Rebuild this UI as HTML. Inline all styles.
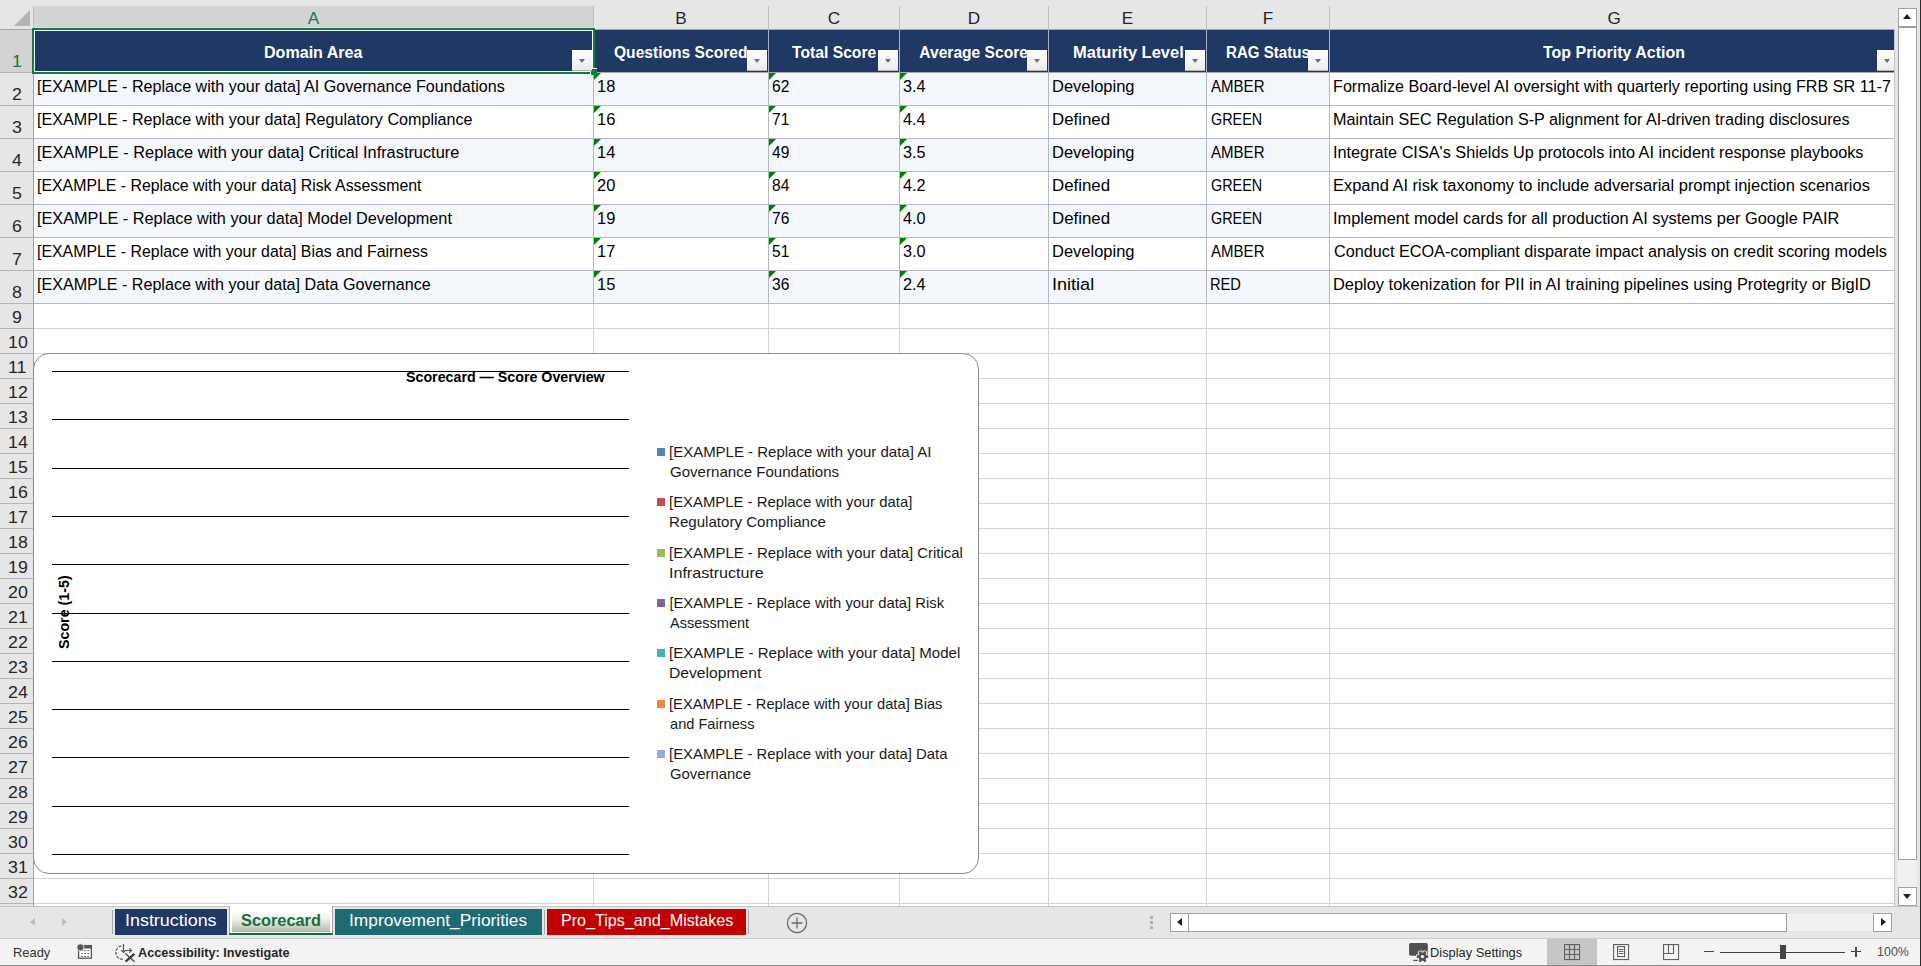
<!DOCTYPE html>
<html><head><meta charset="utf-8"><title>Scorecard</title>
<style>
*{margin:0;padding:0;box-sizing:border-box}
html,body{width:1921px;height:966px;overflow:hidden;background:#fff}
body{position:relative;font-family:"Liberation Sans",sans-serif;color:#000}
.a{position:absolute}
.t{position:absolute;white-space:nowrap;line-height:1;transform-origin:0 0}
.gl{position:absolute;background:#d4d4d4}
.dd{position:absolute;width:20px;height:21px;background:linear-gradient(#ffffff,#ebebef);border-bottom:1px solid #b4b4b4}
.dd:after{content:"";position:absolute;left:7px;top:9px;border-left:3.5px solid transparent;border-right:3.5px solid transparent;border-top:4px solid #6e6e6e}
.ei{position:absolute;width:0;height:0;border-top:7px solid #008000;border-right:7px solid transparent}
</style></head><body>

<div class="a" style="left:0;top:0;width:1921px;height:6px;background:#e6e6e6"></div>
<div class="a" style="left:1894px;top:0;width:27px;height:906px;background:#e6e6e6"></div>
<div class="a" style="left:0;top:0;width:33px;height:30px;background:#e6e6e6;border-bottom:1px solid #a8a8a8"></div>
<div class="a" style="left:14px;top:10px;width:0;height:0;border-left:16px solid transparent;border-bottom:16px solid #b4b4b4"></div>
<div class="gl" style="left:34px;top:328px;width:1860px;height:1px"></div>
<div class="gl" style="left:34px;top:353px;width:1860px;height:1px"></div>
<div class="gl" style="left:34px;top:378px;width:1860px;height:1px"></div>
<div class="gl" style="left:34px;top:403px;width:1860px;height:1px"></div>
<div class="gl" style="left:34px;top:428px;width:1860px;height:1px"></div>
<div class="gl" style="left:34px;top:453px;width:1860px;height:1px"></div>
<div class="gl" style="left:34px;top:478px;width:1860px;height:1px"></div>
<div class="gl" style="left:34px;top:503px;width:1860px;height:1px"></div>
<div class="gl" style="left:34px;top:528px;width:1860px;height:1px"></div>
<div class="gl" style="left:34px;top:553px;width:1860px;height:1px"></div>
<div class="gl" style="left:34px;top:578px;width:1860px;height:1px"></div>
<div class="gl" style="left:34px;top:603px;width:1860px;height:1px"></div>
<div class="gl" style="left:34px;top:628px;width:1860px;height:1px"></div>
<div class="gl" style="left:34px;top:653px;width:1860px;height:1px"></div>
<div class="gl" style="left:34px;top:678px;width:1860px;height:1px"></div>
<div class="gl" style="left:34px;top:703px;width:1860px;height:1px"></div>
<div class="gl" style="left:34px;top:728px;width:1860px;height:1px"></div>
<div class="gl" style="left:34px;top:753px;width:1860px;height:1px"></div>
<div class="gl" style="left:34px;top:778px;width:1860px;height:1px"></div>
<div class="gl" style="left:34px;top:803px;width:1860px;height:1px"></div>
<div class="gl" style="left:34px;top:828px;width:1860px;height:1px"></div>
<div class="gl" style="left:34px;top:853px;width:1860px;height:1px"></div>
<div class="gl" style="left:34px;top:878px;width:1860px;height:1px"></div>
<div class="gl" style="left:34px;top:903px;width:1860px;height:1px"></div>
<div class="gl" style="left:593px;top:304px;width:1px;height:602px"></div>
<div class="gl" style="left:768px;top:304px;width:1px;height:602px"></div>
<div class="gl" style="left:899px;top:304px;width:1px;height:602px"></div>
<div class="gl" style="left:1048px;top:304px;width:1px;height:602px"></div>
<div class="gl" style="left:1206px;top:304px;width:1px;height:602px"></div>
<div class="gl" style="left:1329px;top:304px;width:1px;height:602px"></div>
<div class="gl" style="left:1894px;top:304px;width:1px;height:602px"></div>
<div class="a" style="left:33px;top:6px;width:560px;height:24px;background:#d3d3d3;border-left:1px solid #c0c0c0;border-bottom:1px solid #a8a3a3"></div>
<div class="a" style="left:593px;top:6px;width:175px;height:24px;background:#e6e6e6;border-left:1px solid #c0c0c0;border-bottom:1px solid #a8a3a3"></div>
<div class="a" style="left:768px;top:6px;width:131px;height:24px;background:#e6e6e6;border-left:1px solid #c0c0c0;border-bottom:1px solid #a8a3a3"></div>
<div class="a" style="left:899px;top:6px;width:149px;height:24px;background:#e6e6e6;border-left:1px solid #c0c0c0;border-bottom:1px solid #a8a3a3"></div>
<div class="a" style="left:1048px;top:6px;width:158px;height:24px;background:#e6e6e6;border-left:1px solid #c0c0c0;border-bottom:1px solid #a8a3a3"></div>
<div class="a" style="left:1206px;top:6px;width:123px;height:24px;background:#e6e6e6;border-left:1px solid #c0c0c0;border-bottom:1px solid #a8a3a3"></div>
<div class="a" style="left:1329px;top:6px;width:565px;height:24px;background:#e6e6e6;border-left:1px solid #c0c0c0;border-bottom:1px solid #a8a3a3"></div>
<div class="a" style="left:34px;top:27px;width:559px;height:1px;background:#e6dede"></div>
<div class="a" style="left:0;top:30px;width:34px;height:43px;background:#d3d3d3;border-bottom:1px solid #b4b4b4;border-right:1px solid #a0a0a0"></div>
<div class="a" style="left:0;top:73px;width:34px;height:33px;background:#e6e6e6;border-bottom:1px solid #b4b4b4;border-right:1px solid #a0a0a0"></div>
<div class="a" style="left:0;top:106px;width:34px;height:33px;background:#e6e6e6;border-bottom:1px solid #b4b4b4;border-right:1px solid #a0a0a0"></div>
<div class="a" style="left:0;top:139px;width:34px;height:33px;background:#e6e6e6;border-bottom:1px solid #b4b4b4;border-right:1px solid #a0a0a0"></div>
<div class="a" style="left:0;top:172px;width:34px;height:33px;background:#e6e6e6;border-bottom:1px solid #b4b4b4;border-right:1px solid #a0a0a0"></div>
<div class="a" style="left:0;top:205px;width:34px;height:33px;background:#e6e6e6;border-bottom:1px solid #b4b4b4;border-right:1px solid #a0a0a0"></div>
<div class="a" style="left:0;top:238px;width:34px;height:33px;background:#e6e6e6;border-bottom:1px solid #b4b4b4;border-right:1px solid #a0a0a0"></div>
<div class="a" style="left:0;top:271px;width:34px;height:33px;background:#e6e6e6;border-bottom:1px solid #b4b4b4;border-right:1px solid #a0a0a0"></div>
<div class="a" style="left:0;top:304px;width:34px;height:25px;background:#e6e6e6;border-bottom:1px solid #b4b4b4;border-right:1px solid #a0a0a0"></div>
<div class="a" style="left:0;top:329px;width:34px;height:25px;background:#e6e6e6;border-bottom:1px solid #b4b4b4;border-right:1px solid #a0a0a0"></div>
<div class="a" style="left:0;top:354px;width:34px;height:25px;background:#e6e6e6;border-bottom:1px solid #b4b4b4;border-right:1px solid #a0a0a0"></div>
<div class="a" style="left:0;top:379px;width:34px;height:25px;background:#e6e6e6;border-bottom:1px solid #b4b4b4;border-right:1px solid #a0a0a0"></div>
<div class="a" style="left:0;top:404px;width:34px;height:25px;background:#e6e6e6;border-bottom:1px solid #b4b4b4;border-right:1px solid #a0a0a0"></div>
<div class="a" style="left:0;top:429px;width:34px;height:25px;background:#e6e6e6;border-bottom:1px solid #b4b4b4;border-right:1px solid #a0a0a0"></div>
<div class="a" style="left:0;top:454px;width:34px;height:25px;background:#e6e6e6;border-bottom:1px solid #b4b4b4;border-right:1px solid #a0a0a0"></div>
<div class="a" style="left:0;top:479px;width:34px;height:25px;background:#e6e6e6;border-bottom:1px solid #b4b4b4;border-right:1px solid #a0a0a0"></div>
<div class="a" style="left:0;top:504px;width:34px;height:25px;background:#e6e6e6;border-bottom:1px solid #b4b4b4;border-right:1px solid #a0a0a0"></div>
<div class="a" style="left:0;top:529px;width:34px;height:25px;background:#e6e6e6;border-bottom:1px solid #b4b4b4;border-right:1px solid #a0a0a0"></div>
<div class="a" style="left:0;top:554px;width:34px;height:25px;background:#e6e6e6;border-bottom:1px solid #b4b4b4;border-right:1px solid #a0a0a0"></div>
<div class="a" style="left:0;top:579px;width:34px;height:25px;background:#e6e6e6;border-bottom:1px solid #b4b4b4;border-right:1px solid #a0a0a0"></div>
<div class="a" style="left:0;top:604px;width:34px;height:25px;background:#e6e6e6;border-bottom:1px solid #b4b4b4;border-right:1px solid #a0a0a0"></div>
<div class="a" style="left:0;top:629px;width:34px;height:25px;background:#e6e6e6;border-bottom:1px solid #b4b4b4;border-right:1px solid #a0a0a0"></div>
<div class="a" style="left:0;top:654px;width:34px;height:25px;background:#e6e6e6;border-bottom:1px solid #b4b4b4;border-right:1px solid #a0a0a0"></div>
<div class="a" style="left:0;top:679px;width:34px;height:25px;background:#e6e6e6;border-bottom:1px solid #b4b4b4;border-right:1px solid #a0a0a0"></div>
<div class="a" style="left:0;top:704px;width:34px;height:25px;background:#e6e6e6;border-bottom:1px solid #b4b4b4;border-right:1px solid #a0a0a0"></div>
<div class="a" style="left:0;top:729px;width:34px;height:25px;background:#e6e6e6;border-bottom:1px solid #b4b4b4;border-right:1px solid #a0a0a0"></div>
<div class="a" style="left:0;top:754px;width:34px;height:25px;background:#e6e6e6;border-bottom:1px solid #b4b4b4;border-right:1px solid #a0a0a0"></div>
<div class="a" style="left:0;top:779px;width:34px;height:25px;background:#e6e6e6;border-bottom:1px solid #b4b4b4;border-right:1px solid #a0a0a0"></div>
<div class="a" style="left:0;top:804px;width:34px;height:25px;background:#e6e6e6;border-bottom:1px solid #b4b4b4;border-right:1px solid #a0a0a0"></div>
<div class="a" style="left:0;top:829px;width:34px;height:25px;background:#e6e6e6;border-bottom:1px solid #b4b4b4;border-right:1px solid #a0a0a0"></div>
<div class="a" style="left:0;top:854px;width:34px;height:25px;background:#e6e6e6;border-bottom:1px solid #b4b4b4;border-right:1px solid #a0a0a0"></div>
<div class="a" style="left:0;top:879px;width:34px;height:25px;background:#e6e6e6;border-bottom:1px solid #b4b4b4;border-right:1px solid #a0a0a0"></div>
<div class="a" style="left:0;top:904px;width:34px;height:2px;background:#e6e6e6;border-right:1px solid #a6a6a6"></div>
<div class="a" style="left:34px;top:30px;width:560px;height:43px;background:#203864;border-right:1px solid #aab1bf;border-bottom:1px solid #a9a9a9"></div>
<div class="a" style="left:594px;top:30px;width:175px;height:43px;background:#203864;border-right:1px solid #aab1bf;border-bottom:1px solid #a9a9a9"></div>
<div class="a" style="left:769px;top:30px;width:131px;height:43px;background:#203864;border-right:1px solid #aab1bf;border-bottom:1px solid #a9a9a9"></div>
<div class="a" style="left:900px;top:30px;width:149px;height:43px;background:#203864;border-right:1px solid #aab1bf;border-bottom:1px solid #a9a9a9"></div>
<div class="a" style="left:1049px;top:30px;width:158px;height:43px;background:#203864;border-right:1px solid #aab1bf;border-bottom:1px solid #a9a9a9"></div>
<div class="a" style="left:1207px;top:30px;width:123px;height:43px;background:#203864;border-right:1px solid #aab1bf;border-bottom:1px solid #a9a9a9"></div>
<div class="a" style="left:1330px;top:30px;width:565px;height:43px;background:#203864;border-right:1px solid #aab1bf;border-bottom:1px solid #a9a9a9"></div>
<div class="a" style="left:34px;top:73px;width:560px;height:33px;background:#f3f6fb;border-right:1px solid #b1b8c4;border-bottom:1px solid #b1b8c4"></div>
<div class="a" style="left:594px;top:73px;width:175px;height:33px;background:#f3f6fb;border-right:1px solid #b1b8c4;border-bottom:1px solid #b1b8c4"></div>
<div class="ei" style="left:594px;top:73px"></div>
<div class="a" style="left:769px;top:73px;width:131px;height:33px;background:#f3f6fb;border-right:1px solid #b1b8c4;border-bottom:1px solid #b1b8c4"></div>
<div class="ei" style="left:769px;top:73px"></div>
<div class="a" style="left:900px;top:73px;width:149px;height:33px;background:#f3f6fb;border-right:1px solid #b1b8c4;border-bottom:1px solid #b1b8c4"></div>
<div class="ei" style="left:900px;top:73px"></div>
<div class="a" style="left:1049px;top:73px;width:158px;height:33px;background:#f3f6fb;border-right:1px solid #b1b8c4;border-bottom:1px solid #b1b8c4"></div>
<div class="a" style="left:1207px;top:73px;width:123px;height:33px;background:#f3f6fb;border-right:1px solid #b1b8c4;border-bottom:1px solid #b1b8c4"></div>
<div class="a" style="left:1330px;top:73px;width:565px;height:33px;background:#ffffff;border-right:1px solid #b1b8c4;border-bottom:1px solid #b1b8c4"></div>
<div class="a" style="left:34px;top:106px;width:560px;height:33px;background:#ffffff;border-right:1px solid #b1b8c4;border-bottom:1px solid #b1b8c4"></div>
<div class="a" style="left:594px;top:106px;width:175px;height:33px;background:#ffffff;border-right:1px solid #b1b8c4;border-bottom:1px solid #b1b8c4"></div>
<div class="ei" style="left:594px;top:106px"></div>
<div class="a" style="left:769px;top:106px;width:131px;height:33px;background:#ffffff;border-right:1px solid #b1b8c4;border-bottom:1px solid #b1b8c4"></div>
<div class="ei" style="left:769px;top:106px"></div>
<div class="a" style="left:900px;top:106px;width:149px;height:33px;background:#ffffff;border-right:1px solid #b1b8c4;border-bottom:1px solid #b1b8c4"></div>
<div class="ei" style="left:900px;top:106px"></div>
<div class="a" style="left:1049px;top:106px;width:158px;height:33px;background:#ffffff;border-right:1px solid #b1b8c4;border-bottom:1px solid #b1b8c4"></div>
<div class="a" style="left:1207px;top:106px;width:123px;height:33px;background:#ffffff;border-right:1px solid #b1b8c4;border-bottom:1px solid #b1b8c4"></div>
<div class="a" style="left:1330px;top:106px;width:565px;height:33px;background:#ffffff;border-right:1px solid #b1b8c4;border-bottom:1px solid #b1b8c4"></div>
<div class="a" style="left:34px;top:139px;width:560px;height:33px;background:#f3f6fb;border-right:1px solid #b1b8c4;border-bottom:1px solid #b1b8c4"></div>
<div class="a" style="left:594px;top:139px;width:175px;height:33px;background:#f3f6fb;border-right:1px solid #b1b8c4;border-bottom:1px solid #b1b8c4"></div>
<div class="ei" style="left:594px;top:139px"></div>
<div class="a" style="left:769px;top:139px;width:131px;height:33px;background:#f3f6fb;border-right:1px solid #b1b8c4;border-bottom:1px solid #b1b8c4"></div>
<div class="ei" style="left:769px;top:139px"></div>
<div class="a" style="left:900px;top:139px;width:149px;height:33px;background:#f3f6fb;border-right:1px solid #b1b8c4;border-bottom:1px solid #b1b8c4"></div>
<div class="ei" style="left:900px;top:139px"></div>
<div class="a" style="left:1049px;top:139px;width:158px;height:33px;background:#f3f6fb;border-right:1px solid #b1b8c4;border-bottom:1px solid #b1b8c4"></div>
<div class="a" style="left:1207px;top:139px;width:123px;height:33px;background:#f3f6fb;border-right:1px solid #b1b8c4;border-bottom:1px solid #b1b8c4"></div>
<div class="a" style="left:1330px;top:139px;width:565px;height:33px;background:#ffffff;border-right:1px solid #b1b8c4;border-bottom:1px solid #b1b8c4"></div>
<div class="a" style="left:34px;top:172px;width:560px;height:33px;background:#ffffff;border-right:1px solid #b1b8c4;border-bottom:1px solid #b1b8c4"></div>
<div class="a" style="left:594px;top:172px;width:175px;height:33px;background:#ffffff;border-right:1px solid #b1b8c4;border-bottom:1px solid #b1b8c4"></div>
<div class="ei" style="left:594px;top:172px"></div>
<div class="a" style="left:769px;top:172px;width:131px;height:33px;background:#ffffff;border-right:1px solid #b1b8c4;border-bottom:1px solid #b1b8c4"></div>
<div class="ei" style="left:769px;top:172px"></div>
<div class="a" style="left:900px;top:172px;width:149px;height:33px;background:#ffffff;border-right:1px solid #b1b8c4;border-bottom:1px solid #b1b8c4"></div>
<div class="ei" style="left:900px;top:172px"></div>
<div class="a" style="left:1049px;top:172px;width:158px;height:33px;background:#ffffff;border-right:1px solid #b1b8c4;border-bottom:1px solid #b1b8c4"></div>
<div class="a" style="left:1207px;top:172px;width:123px;height:33px;background:#ffffff;border-right:1px solid #b1b8c4;border-bottom:1px solid #b1b8c4"></div>
<div class="a" style="left:1330px;top:172px;width:565px;height:33px;background:#ffffff;border-right:1px solid #b1b8c4;border-bottom:1px solid #b1b8c4"></div>
<div class="a" style="left:34px;top:205px;width:560px;height:33px;background:#f3f6fb;border-right:1px solid #b1b8c4;border-bottom:1px solid #b1b8c4"></div>
<div class="a" style="left:594px;top:205px;width:175px;height:33px;background:#f3f6fb;border-right:1px solid #b1b8c4;border-bottom:1px solid #b1b8c4"></div>
<div class="ei" style="left:594px;top:205px"></div>
<div class="a" style="left:769px;top:205px;width:131px;height:33px;background:#f3f6fb;border-right:1px solid #b1b8c4;border-bottom:1px solid #b1b8c4"></div>
<div class="ei" style="left:769px;top:205px"></div>
<div class="a" style="left:900px;top:205px;width:149px;height:33px;background:#f3f6fb;border-right:1px solid #b1b8c4;border-bottom:1px solid #b1b8c4"></div>
<div class="ei" style="left:900px;top:205px"></div>
<div class="a" style="left:1049px;top:205px;width:158px;height:33px;background:#f3f6fb;border-right:1px solid #b1b8c4;border-bottom:1px solid #b1b8c4"></div>
<div class="a" style="left:1207px;top:205px;width:123px;height:33px;background:#f3f6fb;border-right:1px solid #b1b8c4;border-bottom:1px solid #b1b8c4"></div>
<div class="a" style="left:1330px;top:205px;width:565px;height:33px;background:#ffffff;border-right:1px solid #b1b8c4;border-bottom:1px solid #b1b8c4"></div>
<div class="a" style="left:34px;top:238px;width:560px;height:33px;background:#ffffff;border-right:1px solid #b1b8c4;border-bottom:1px solid #b1b8c4"></div>
<div class="a" style="left:594px;top:238px;width:175px;height:33px;background:#ffffff;border-right:1px solid #b1b8c4;border-bottom:1px solid #b1b8c4"></div>
<div class="ei" style="left:594px;top:238px"></div>
<div class="a" style="left:769px;top:238px;width:131px;height:33px;background:#ffffff;border-right:1px solid #b1b8c4;border-bottom:1px solid #b1b8c4"></div>
<div class="ei" style="left:769px;top:238px"></div>
<div class="a" style="left:900px;top:238px;width:149px;height:33px;background:#ffffff;border-right:1px solid #b1b8c4;border-bottom:1px solid #b1b8c4"></div>
<div class="ei" style="left:900px;top:238px"></div>
<div class="a" style="left:1049px;top:238px;width:158px;height:33px;background:#ffffff;border-right:1px solid #b1b8c4;border-bottom:1px solid #b1b8c4"></div>
<div class="a" style="left:1207px;top:238px;width:123px;height:33px;background:#ffffff;border-right:1px solid #b1b8c4;border-bottom:1px solid #b1b8c4"></div>
<div class="a" style="left:1330px;top:238px;width:565px;height:33px;background:#ffffff;border-right:1px solid #b1b8c4;border-bottom:1px solid #b1b8c4"></div>
<div class="a" style="left:34px;top:271px;width:560px;height:33px;background:#f3f6fb;border-right:1px solid #b1b8c4;border-bottom:1px solid #b1b8c4"></div>
<div class="a" style="left:594px;top:271px;width:175px;height:33px;background:#f3f6fb;border-right:1px solid #b1b8c4;border-bottom:1px solid #b1b8c4"></div>
<div class="ei" style="left:594px;top:271px"></div>
<div class="a" style="left:769px;top:271px;width:131px;height:33px;background:#f3f6fb;border-right:1px solid #b1b8c4;border-bottom:1px solid #b1b8c4"></div>
<div class="ei" style="left:769px;top:271px"></div>
<div class="a" style="left:900px;top:271px;width:149px;height:33px;background:#f3f6fb;border-right:1px solid #b1b8c4;border-bottom:1px solid #b1b8c4"></div>
<div class="ei" style="left:900px;top:271px"></div>
<div class="a" style="left:1049px;top:271px;width:158px;height:33px;background:#f3f6fb;border-right:1px solid #b1b8c4;border-bottom:1px solid #b1b8c4"></div>
<div class="a" style="left:1207px;top:271px;width:123px;height:33px;background:#f3f6fb;border-right:1px solid #b1b8c4;border-bottom:1px solid #b1b8c4"></div>
<div class="a" style="left:1330px;top:271px;width:565px;height:33px;background:#ffffff;border-right:1px solid #b1b8c4;border-bottom:1px solid #b1b8c4"></div>
<div class="a" style="left:32px;top:28px;width:563px;height:46px;border:2px solid #107c41"></div>
<div class="a" style="left:34px;top:30px;width:559px;height:42px;border:1px solid #fff"></div>
<div class="a" style="left:590px;top:68px;width:7px;height:7px;background:#107c41;border-left:1px solid #fff;border-top:1px solid #fff"></div>
<div class="a" style="left:33px;top:353px;width:946px;height:521px;background:#fff;border:1px solid #8a8a8a;border-radius:16px"></div>
<div class="a" style="left:52px;top:371px;width:577px;height:1px;background:#000"></div>
<div class="a" style="left:52px;top:419px;width:577px;height:1px;background:#000"></div>
<div class="a" style="left:52px;top:468px;width:577px;height:1px;background:#000"></div>
<div class="a" style="left:52px;top:516px;width:577px;height:1px;background:#000"></div>
<div class="a" style="left:52px;top:564px;width:577px;height:1px;background:#000"></div>
<div class="a" style="left:52px;top:613px;width:577px;height:1px;background:#000"></div>
<div class="a" style="left:52px;top:661px;width:577px;height:1px;background:#000"></div>
<div class="a" style="left:52px;top:709px;width:577px;height:1px;background:#000"></div>
<div class="a" style="left:52px;top:757px;width:577px;height:1px;background:#000"></div>
<div class="a" style="left:52px;top:806px;width:577px;height:1px;background:#000"></div>
<div class="a" style="left:52px;top:854px;width:577px;height:1px;background:#000"></div>
<div class="a" style="left:657px;top:448px;width:8px;height:8px;background:#4f81bd"></div>
<div class="a" style="left:657px;top:498px;width:8px;height:8px;background:#c0504d"></div>
<div class="a" style="left:657px;top:549px;width:8px;height:8px;background:#9bbb59"></div>
<div class="a" style="left:657px;top:599px;width:8px;height:8px;background:#8064a2"></div>
<div class="a" style="left:657px;top:649px;width:8px;height:8px;background:#4bacc6"></div>
<div class="a" style="left:657px;top:700px;width:8px;height:8px;background:#ea8a40"></div>
<div class="a" style="left:657px;top:750px;width:8px;height:8px;background:#95abd6"></div>
<div class="a" style="left:1894px;top:29px;width:1px;height:877px;background:#c6c6c6"></div>
<div class="a" style="left:1898px;top:8px;width:19px;height:19px;background:#fff;border:1px solid #a0a0a0"></div>
<div class="a" style="left:1903px;top:14px;width:0;height:0;border-left:4.5px solid transparent;border-right:4.5px solid transparent;border-bottom:5px solid #1e1e1e"></div>
<div class="a" style="left:1898px;top:27px;width:19px;height:833px;background:#fff;border:1px solid #a0a0a0"></div>
<div class="a" style="left:1898px;top:860px;width:19px;height:28px;background:#f0f0f0"></div>
<div class="a" style="left:1898px;top:887px;width:19px;height:19px;background:#fff;border:1px solid #a0a0a0"></div>
<div class="a" style="left:1903px;top:894px;width:0;height:0;border-left:4.5px solid transparent;border-right:4.5px solid transparent;border-top:5px solid #1e1e1e"></div>
<div class="a" style="left:0;top:906px;width:1920px;height:32px;background:#e6e6e6;border-top:1px solid #c6c6c6"></div>
<div class="a" style="left:30px;top:918px;width:0;height:0;border-top:4.5px solid transparent;border-bottom:4.5px solid transparent;border-right:5px solid #bdbdbd"></div>
<div class="a" style="left:62px;top:918px;width:0;height:0;border-top:4.5px solid transparent;border-bottom:4.5px solid transparent;border-left:5px solid #bdbdbd"></div>
<div class="a" style="left:112px;top:910px;width:1px;height:24px;background:#a8a8a8"></div>
<div class="a" style="left:115px;top:909px;width:112px;height:26px;background:#1f3864"></div>
<div class="a" style="left:229px;top:906px;width:104px;height:27px;background:#fff;border-left:1px solid #a8a8a8;border-right:1px solid #a8a8a8"></div>
<div class="a" style="left:232px;top:910px;width:98px;height:22px;background:linear-gradient(#ffffff 0%,#eef1ec 40%,#c4cfbe 80%,#a9b8a3 100%)"></div>
<div class="a" style="left:229px;top:933px;width:104px;height:2px;background:#13703a"></div>
<div class="a" style="left:335px;top:909px;width:207px;height:26px;background:#1e6b73"></div>
<div class="a" style="left:547px;top:909px;width:199px;height:26px;background:#c00000"></div>
<div class="a" style="left:544px;top:910px;width:1px;height:24px;background:#a8a8a8"></div>
<div class="a" style="left:748px;top:910px;width:1px;height:24px;background:#a8a8a8"></div>
<svg class="a" style="left:786px;top:912px" width="22" height="22" viewBox="0 0 22 22"><circle cx="11" cy="11" r="9.6" fill="none" stroke="#6b6b6b" stroke-width="1.3"/><path d="M5.5 11H16.5 M11 5.5V16.5" stroke="#6b6b6b" stroke-width="1.3"/></svg>
<div class="a" style="left:1150px;top:916px;width:3px;height:3px;background:#b0b0b0"></div>
<div class="a" style="left:1150px;top:921px;width:3px;height:3px;background:#b0b0b0"></div>
<div class="a" style="left:1150px;top:926px;width:3px;height:3px;background:#b0b0b0"></div>
<div class="a" style="left:1170px;top:913px;width:19px;height:19px;background:#fff;border:1px solid #a0a0a0"></div>
<div class="a" style="left:1177px;top:918px;width:0;height:0;border-top:4.5px solid transparent;border-bottom:4.5px solid transparent;border-right:5px solid #1e1e1e"></div>
<div class="a" style="left:1188px;top:913px;width:599px;height:19px;background:#fff;border:1px solid #a0a0a0"></div>
<div class="a" style="left:1787px;top:914px;width:87px;height:17px;background:#f0f0f0"></div>
<div class="a" style="left:1873px;top:913px;width:19px;height:19px;background:#fff;border:1px solid #a0a0a0"></div>
<div class="a" style="left:1881px;top:918px;width:0;height:0;border-top:4.5px solid transparent;border-bottom:4.5px solid transparent;border-left:5px solid #1e1e1e"></div>
<div class="a" style="left:0;top:938px;width:1920px;height:28px;background:#f3f3f3;border-top:1px solid #cdcdcd;border-bottom:1px solid #8a8a8a"></div>
<svg class="a" style="left:76px;top:943px" width="18" height="18" viewBox="0 0 18 18"><rect x="2.6" y="2.6" width="12.8" height="12.6" fill="#fff" stroke="#555" stroke-width="1.3"/><rect x="8" y="2" width="8" height="3.5" fill="#555"/><g fill="#555"><rect x="5.3" y="7" width="1.6" height="1"/><rect x="8.3" y="7" width="1.6" height="1"/><rect x="11.3" y="7" width="1.6" height="1"/><rect x="5.3" y="10" width="1.6" height="1"/><rect x="8.3" y="10" width="1.6" height="1"/><rect x="11.3" y="10" width="1.6" height="1"/><rect x="5.3" y="13" width="1.6" height="1"/><rect x="8.3" y="13" width="1.6" height="1"/><rect x="11.3" y="13" width="1.6" height="1"/></g><circle cx="4.4" cy="4.4" r="3.6" fill="#555" stroke="#f3f3f3" stroke-width="0.8"/></svg>
<svg class="a" style="left:112px;top:942px" width="24" height="22" viewBox="0 0 24 22"><path d="M9.5 3.8 A6.8 6.8 0 0 0 10.8 17.3" fill="none" stroke="#555" stroke-width="1.2" stroke-dasharray="3 1.3"/><path d="M11.5 2V10.5 M9.2 8.2 L11.5 10.5 L13.8 8.2" fill="none" stroke="#555" stroke-width="1.2"/><path d="M13.5 8.5H19.5 M17.3 6.3 L19.5 8.5 L17.3 10.7" fill="none" stroke="#555" stroke-width="1.2"/><path d="M13.3 11.5 L22.6 19.8" stroke="#444" stroke-width="1.3"/><path d="M22.4 11.9 L13.5 19.6" stroke="#3a3a3a" stroke-width="2.3"/></svg>
<svg class="a" style="left:1408px;top:942px" width="22" height="22" viewBox="0 0 22 22"><rect x="1.1" y="1.1" width="18.7" height="12.6" rx="1.6" fill="#505050"/><path d="M5.2 18.4H9.8" stroke="#505050" stroke-width="1.3"/><g transform="translate(14.5 14.6)"><g fill="#505050" stroke="#f3f3f3" stroke-width="1.6"><rect x="-1.3" y="-5.7" width="2.6" height="11.4" transform="rotate(30)"/><rect x="-1.3" y="-5.7" width="2.6" height="11.4" transform="rotate(90)"/><rect x="-1.3" y="-5.7" width="2.6" height="11.4" transform="rotate(150)"/><circle r="4.2"/></g><g fill="#505050"><rect x="-1.3" y="-5.7" width="2.6" height="11.4" transform="rotate(30)"/><rect x="-1.3" y="-5.7" width="2.6" height="11.4" transform="rotate(90)"/><rect x="-1.3" y="-5.7" width="2.6" height="11.4" transform="rotate(150)"/><circle r="4.2"/></g><circle r="1.7" fill="#f3f3f3"/></g></svg>
<div class="a" style="left:1547px;top:939px;width:50px;height:26px;background:#c6c6c6"></div>
<svg class="a" style="left:1563px;top:943px" width="18" height="18" viewBox="0 0 18 18"><g fill="none" stroke="#606060" stroke-width="1.1"><rect x="1.55" y="1.55" width="15" height="15"/><path d="M6.5 1.5V16.5 M11.5 1.5V16.5 M1.5 6.5H16.5 M1.5 11.5H16.5"/></g></svg>
<svg class="a" style="left:1612px;top:943px" width="18" height="18" viewBox="0 0 18 18"><g fill="none" stroke="#606060" stroke-width="1.1"><rect x="1.55" y="1.55" width="15" height="15"/><rect x="5.55" y="3.55" width="7" height="10"/><path d="M7 6.5H11.5 M7 8.5H11.5 M7 10.5H11.5"/></g></svg>
<svg class="a" style="left:1662px;top:943px" width="18" height="18" viewBox="0 0 18 18"><g fill="none" stroke="#606060" stroke-width="1.1"><rect x="1.55" y="1.55" width="15" height="15"/><path d="M1.5 10.5H11.5V1.5 M6.5 1.5V10.5"/></g></svg>
<div class="a" style="left:1704px;top:951px;width:10px;height:1.2px;background:#444"></div>
<div class="a" style="left:1720px;top:952px;width:125px;height:1.2px;background:#404040"></div>
<div class="a" style="left:1780px;top:945px;width:6px;height:14px;background:#444"></div>
<div class="a" style="left:1851px;top:951px;width:10px;height:1.2px;background:#444"></div>
<div class="a" style="left:1855.4px;top:947px;width:1.2px;height:9.5px;background:#444"></div>
<div class="a" style="left:1920px;top:0;width:1px;height:966px;background:#2b2b2b"></div>
<div class="t" style="left:307.77px;top:10.44px;font-size:17.2px;color:#107c41">A</div>
<div class="t" style="left:675.27px;top:10.44px;font-size:17.2px;color:#262626">B</div>
<div class="t" style="left:827.79px;top:10.44px;font-size:17.2px;color:#262626">C</div>
<div class="t" style="left:967.79px;top:10.44px;font-size:17.2px;color:#262626">D</div>
<div class="t" style="left:1121.77px;top:10.44px;font-size:17.2px;color:#262626">E</div>
<div class="t" style="left:1262.75px;top:10.44px;font-size:17.2px;color:#262626">F</div>
<div class="t" style="left:1607.51px;top:10.44px;font-size:17.2px;color:#262626">G</div>
<div class="t" style="left:12.45px;top:53.78px;font-size:16.8px;color:#107c41;transform:scaleX(1.0600)">1</div>
<div class="t" style="left:12.45px;top:86.78px;font-size:16.8px;color:#262626;transform:scaleX(1.0600)">2</div>
<div class="t" style="left:12.45px;top:119.78px;font-size:16.8px;color:#262626;transform:scaleX(1.0600)">3</div>
<div class="t" style="left:12.45px;top:152.78px;font-size:16.8px;color:#262626;transform:scaleX(1.0600)">4</div>
<div class="t" style="left:12.45px;top:185.78px;font-size:16.8px;color:#262626;transform:scaleX(1.0600)">5</div>
<div class="t" style="left:12.45px;top:218.78px;font-size:16.8px;color:#262626;transform:scaleX(1.0600)">6</div>
<div class="t" style="left:12.45px;top:251.78px;font-size:16.8px;color:#262626;transform:scaleX(1.0600)">7</div>
<div class="t" style="left:12.45px;top:284.78px;font-size:16.8px;color:#262626;transform:scaleX(1.0600)">8</div>
<div class="t" style="left:12.45px;top:309.78px;font-size:16.8px;color:#262626;transform:scaleX(1.0600)">9</div>
<div class="t" style="left:7.50px;top:334.78px;font-size:16.8px;color:#262626;transform:scaleX(1.0600)">10</div>
<div class="t" style="left:8.17px;top:359.78px;font-size:16.8px;color:#262626;transform:scaleX(1.0600)">11</div>
<div class="t" style="left:7.50px;top:384.78px;font-size:16.8px;color:#262626;transform:scaleX(1.0600)">12</div>
<div class="t" style="left:7.50px;top:409.78px;font-size:16.8px;color:#262626;transform:scaleX(1.0600)">13</div>
<div class="t" style="left:7.50px;top:434.78px;font-size:16.8px;color:#262626;transform:scaleX(1.0600)">14</div>
<div class="t" style="left:7.50px;top:459.78px;font-size:16.8px;color:#262626;transform:scaleX(1.0600)">15</div>
<div class="t" style="left:7.50px;top:484.78px;font-size:16.8px;color:#262626;transform:scaleX(1.0600)">16</div>
<div class="t" style="left:7.50px;top:509.78px;font-size:16.8px;color:#262626;transform:scaleX(1.0600)">17</div>
<div class="t" style="left:7.50px;top:534.78px;font-size:16.8px;color:#262626;transform:scaleX(1.0600)">18</div>
<div class="t" style="left:7.50px;top:559.78px;font-size:16.8px;color:#262626;transform:scaleX(1.0600)">19</div>
<div class="t" style="left:7.50px;top:584.78px;font-size:16.8px;color:#262626;transform:scaleX(1.0600)">20</div>
<div class="t" style="left:7.50px;top:609.78px;font-size:16.8px;color:#262626;transform:scaleX(1.0600)">21</div>
<div class="t" style="left:7.50px;top:634.78px;font-size:16.8px;color:#262626;transform:scaleX(1.0600)">22</div>
<div class="t" style="left:7.50px;top:659.78px;font-size:16.8px;color:#262626;transform:scaleX(1.0600)">23</div>
<div class="t" style="left:7.50px;top:684.78px;font-size:16.8px;color:#262626;transform:scaleX(1.0600)">24</div>
<div class="t" style="left:7.50px;top:709.78px;font-size:16.8px;color:#262626;transform:scaleX(1.0600)">25</div>
<div class="t" style="left:7.50px;top:734.78px;font-size:16.8px;color:#262626;transform:scaleX(1.0600)">26</div>
<div class="t" style="left:7.50px;top:759.78px;font-size:16.8px;color:#262626;transform:scaleX(1.0600)">27</div>
<div class="t" style="left:7.50px;top:784.78px;font-size:16.8px;color:#262626;transform:scaleX(1.0600)">28</div>
<div class="t" style="left:7.50px;top:809.78px;font-size:16.8px;color:#262626;transform:scaleX(1.0600)">29</div>
<div class="t" style="left:7.50px;top:834.78px;font-size:16.8px;color:#262626;transform:scaleX(1.0600)">30</div>
<div class="t" style="left:7.50px;top:859.78px;font-size:16.8px;color:#262626;transform:scaleX(1.0600)">31</div>
<div class="t" style="left:7.50px;top:884.78px;font-size:16.8px;color:#262626;transform:scaleX(1.0600)">32</div>
<div class="t" style="left:263.80px;top:44.99px;font-size:15.6px;color:#fff;font-weight:bold;transform:scaleX(1.0301)">Domain Area</div>
<div class="t" style="left:613.99px;top:44.99px;font-size:15.6px;color:#fff;font-weight:bold">Questions Scored</div>
<div class="t" style="left:791.60px;top:44.99px;font-size:15.6px;color:#fff;font-weight:bold;transform:scaleX(1.0063)">Total Score</div>
<div class="t" style="left:919.30px;top:44.99px;font-size:15.6px;color:#fff;font-weight:bold">Average Score</div>
<div class="t" style="left:1073.19px;top:44.99px;font-size:15.6px;color:#fff;font-weight:bold;transform:scaleX(1.0560)">Maturity Level</div>
<div class="t" style="left:1225.90px;top:44.99px;font-size:15.6px;color:#fff;font-weight:bold;transform:scaleX(0.9682)">RAG Status</div>
<div class="t" style="left:1543.20px;top:44.99px;font-size:15.6px;color:#fff;font-weight:bold;transform:scaleX(1.0238)">Top Priority Action</div>
<div class="t" style="left:37.20px;top:78.75px;font-size:15.65px;color:#000;transform:scaleX(1.0306)">[EXAMPLE - Replace with your data] AI Governance Foundations</div>
<div class="t" style="left:596.98px;top:78.75px;font-size:15.65px;color:#000;transform:scaleX(1.0522)">18</div>
<div class="t" style="left:772.43px;top:78.75px;font-size:15.65px;color:#000;transform:scaleX(0.9937)">62</div>
<div class="t" style="left:903.39px;top:78.75px;font-size:15.65px;color:#000;transform:scaleX(1.0357)">3.4</div>
<div class="t" style="left:1052.19px;top:78.75px;font-size:15.65px;color:#000;transform:scaleX(1.0544)">Developing</div>
<div class="t" style="left:1210.81px;top:78.75px;font-size:15.65px;color:#000;transform:scaleX(0.9618)">AMBER</div>
<div class="t" style="left:1333.00px;top:78.75px;font-size:15.65px;color:#000;transform:scaleX(1.0340)">Formalize Board-level AI oversight with quarterly reporting using FRB SR 11-7</div>
<div class="t" style="left:37.20px;top:111.75px;font-size:15.65px;color:#000;transform:scaleX(1.0308)">[EXAMPLE - Replace with your data] Regulatory Compliance</div>
<div class="t" style="left:596.98px;top:111.75px;font-size:15.65px;color:#000;transform:scaleX(1.0522)">16</div>
<div class="t" style="left:772.43px;top:111.75px;font-size:15.65px;color:#000;transform:scaleX(0.9937)">71</div>
<div class="t" style="left:903.39px;top:111.75px;font-size:15.65px;color:#000;transform:scaleX(1.0357)">4.4</div>
<div class="t" style="left:1052.18px;top:111.75px;font-size:15.65px;color:#000;transform:scaleX(1.0782)">Defined</div>
<div class="t" style="left:1210.80px;top:111.75px;font-size:15.65px;color:#000;transform:scaleX(0.9186)">GREEN</div>
<div class="t" style="left:1333.00px;top:111.75px;font-size:15.65px;color:#000;transform:scaleX(1.0324)">Maintain SEC Regulation S-P alignment for AI-driven trading disclosures</div>
<div class="t" style="left:37.20px;top:144.75px;font-size:15.65px;color:#000;transform:scaleX(1.0447)">[EXAMPLE - Replace with your data] Critical Infrastructure</div>
<div class="t" style="left:596.98px;top:144.75px;font-size:15.65px;color:#000;transform:scaleX(1.0522)">14</div>
<div class="t" style="left:772.43px;top:144.75px;font-size:15.65px;color:#000;transform:scaleX(0.9937)">49</div>
<div class="t" style="left:903.39px;top:144.75px;font-size:15.65px;color:#000;transform:scaleX(1.0357)">3.5</div>
<div class="t" style="left:1052.19px;top:144.75px;font-size:15.65px;color:#000;transform:scaleX(1.0544)">Developing</div>
<div class="t" style="left:1210.81px;top:144.75px;font-size:15.65px;color:#000;transform:scaleX(0.9618)">AMBER</div>
<div class="t" style="left:1333.00px;top:144.75px;font-size:15.65px;color:#000;transform:scaleX(1.0387)">Integrate CISA's Shields Up protocols into AI incident response playbooks</div>
<div class="t" style="left:37.20px;top:177.75px;font-size:15.65px;color:#000;transform:scaleX(1.0145)">[EXAMPLE - Replace with your data] Risk Assessment</div>
<div class="t" style="left:596.98px;top:177.75px;font-size:15.65px;color:#000;transform:scaleX(1.0522)">20</div>
<div class="t" style="left:772.43px;top:177.75px;font-size:15.65px;color:#000;transform:scaleX(0.9937)">84</div>
<div class="t" style="left:903.39px;top:177.75px;font-size:15.65px;color:#000;transform:scaleX(1.0357)">4.2</div>
<div class="t" style="left:1052.18px;top:177.75px;font-size:15.65px;color:#000;transform:scaleX(1.0782)">Defined</div>
<div class="t" style="left:1210.80px;top:177.75px;font-size:15.65px;color:#000;transform:scaleX(0.9186)">GREEN</div>
<div class="t" style="left:1333.00px;top:177.75px;font-size:15.65px;color:#000;transform:scaleX(1.0521)">Expand AI risk taxonomy to include adversarial prompt injection scenarios</div>
<div class="t" style="left:37.20px;top:210.75px;font-size:15.65px;color:#000;transform:scaleX(1.0398)">[EXAMPLE - Replace with your data] Model Development</div>
<div class="t" style="left:596.98px;top:210.75px;font-size:15.65px;color:#000;transform:scaleX(1.0522)">19</div>
<div class="t" style="left:772.43px;top:210.75px;font-size:15.65px;color:#000;transform:scaleX(0.9937)">76</div>
<div class="t" style="left:903.39px;top:210.75px;font-size:15.65px;color:#000;transform:scaleX(1.0357)">4.0</div>
<div class="t" style="left:1052.18px;top:210.75px;font-size:15.65px;color:#000;transform:scaleX(1.0782)">Defined</div>
<div class="t" style="left:1210.80px;top:210.75px;font-size:15.65px;color:#000;transform:scaleX(0.9186)">GREEN</div>
<div class="t" style="left:1333.00px;top:210.75px;font-size:15.65px;color:#000;transform:scaleX(1.0462)">Implement model cards for all production AI systems per Google PAIR</div>
<div class="t" style="left:37.20px;top:243.75px;font-size:15.65px;color:#000;transform:scaleX(1.0150)">[EXAMPLE - Replace with your data] Bias and Fairness</div>
<div class="t" style="left:596.98px;top:243.75px;font-size:15.65px;color:#000;transform:scaleX(1.0522)">17</div>
<div class="t" style="left:772.43px;top:243.75px;font-size:15.65px;color:#000;transform:scaleX(0.9937)">51</div>
<div class="t" style="left:903.39px;top:243.75px;font-size:15.65px;color:#000;transform:scaleX(1.0357)">3.0</div>
<div class="t" style="left:1052.19px;top:243.75px;font-size:15.65px;color:#000;transform:scaleX(1.0544)">Developing</div>
<div class="t" style="left:1210.81px;top:243.75px;font-size:15.65px;color:#000;transform:scaleX(0.9618)">AMBER</div>
<div class="t" style="left:1334.00px;top:243.75px;font-size:15.65px;color:#000;transform:scaleX(1.0376)">Conduct ECOA-compliant disparate impact analysis on credit scoring models</div>
<div class="t" style="left:37.20px;top:276.75px;font-size:15.65px;color:#000;transform:scaleX(1.0292)">[EXAMPLE - Replace with your data] Data Governance</div>
<div class="t" style="left:596.98px;top:276.75px;font-size:15.65px;color:#000;transform:scaleX(1.0522)">15</div>
<div class="t" style="left:772.43px;top:276.75px;font-size:15.65px;color:#000;transform:scaleX(0.9937)">36</div>
<div class="t" style="left:903.39px;top:276.75px;font-size:15.65px;color:#000;transform:scaleX(1.0357)">2.4</div>
<div class="t" style="left:1052.19px;top:276.75px;font-size:15.65px;color:#000;transform:scaleX(1.1551)">Initial</div>
<div class="t" style="left:1209.78px;top:276.75px;font-size:15.65px;color:#000;transform:scaleX(0.9364)">RED</div>
<div class="t" style="left:1333.00px;top:276.75px;font-size:15.65px;color:#000;transform:scaleX(1.0487)">Deploy tokenization for PII in AI training pipelines using Protegrity or BigID</div>
<div class="t" style="left:406.00px;top:369.98px;font-size:14.2px;color:#000;font-weight:bold;transform:scaleX(1.0038)">Scorecard — Score Overview</div>
<div class="t" style="left:669.40px;top:444.67px;font-size:14.8px;color:#1a1a1a;transform:scaleX(1.0125)">[EXAMPLE - Replace with your data] AI</div>
<div class="t" style="left:670.00px;top:464.67px;font-size:14.8px;color:#1a1a1a;transform:scaleX(1.0176)">Governance Foundations</div>
<div class="t" style="left:669.40px;top:494.67px;font-size:14.8px;color:#1a1a1a;transform:scaleX(1.0062)">[EXAMPLE - Replace with your data]</div>
<div class="t" style="left:669.00px;top:514.67px;font-size:14.8px;color:#1a1a1a;transform:scaleX(1.0201)">Regulatory Compliance</div>
<div class="t" style="left:669.40px;top:545.67px;font-size:14.8px;color:#1a1a1a;transform:scaleX(1.0095)">[EXAMPLE - Replace with your data] Critical</div>
<div class="t" style="left:669.00px;top:565.67px;font-size:14.8px;color:#1a1a1a;transform:scaleX(1.0864)">Infrastructure</div>
<div class="t" style="left:669.40px;top:595.67px;font-size:14.8px;color:#1a1a1a">[EXAMPLE - Replace with your data] Risk</div>
<div class="t" style="left:670.00px;top:615.67px;font-size:14.8px;color:#1a1a1a;transform:scaleX(0.9815)">Assessment</div>
<div class="t" style="left:669.40px;top:645.67px;font-size:14.8px;color:#1a1a1a;transform:scaleX(1.0178)">[EXAMPLE - Replace with your data] Model</div>
<div class="t" style="left:669.00px;top:665.67px;font-size:14.8px;color:#1a1a1a;transform:scaleX(1.0587)">Development</div>
<div class="t" style="left:669.40px;top:696.67px;font-size:14.8px;color:#1a1a1a;transform:scaleX(0.9956)">[EXAMPLE - Replace with your data] Bias</div>
<div class="t" style="left:670.00px;top:716.67px;font-size:14.8px;color:#1a1a1a;transform:scaleX(0.9877)">and Fairness</div>
<div class="t" style="left:669.40px;top:746.67px;font-size:14.8px;color:#1a1a1a;transform:scaleX(1.0048)">[EXAMPLE - Replace with your data] Data</div>
<div class="t" style="left:670.00px;top:766.67px;font-size:14.8px;color:#1a1a1a;transform:scaleX(1.0059)">Governance</div>
<div class="t" style="left:124.56px;top:911.61px;font-size:17px;color:#fff;transform:scaleX(1.0532)">Instructions</div>
<div class="t" style="left:240.80px;top:912.29px;font-size:16.2px;color:#17703c;font-weight:bold;transform:scaleX(1.0091)">Scorecard</div>
<div class="t" style="left:348.78px;top:911.61px;font-size:17px;color:#fff;transform:scaleX(1.0191)">Improvement_Priorities</div>
<div class="t" style="left:560.80px;top:911.61px;font-size:17px;color:#fff;transform:scaleX(0.9480)">Pro_Tips_and_Mistakes</div>
<div class="t" style="left:12.80px;top:945.74px;font-size:13.3px;color:#333;transform:scaleX(0.9706)">Ready</div>
<div class="t" style="left:138.00px;top:945.74px;font-size:13.3px;color:#262626;font-weight:bold;transform:scaleX(0.9535)">Accessibility: Investigate</div>
<div class="t" style="left:1430.22px;top:945.74px;font-size:13.3px;color:#262626;transform:scaleX(0.9668)">Display Settings</div>
<div class="t" style="left:1877.19px;top:946.33px;font-size:12.6px;color:#505050;transform:scaleX(0.9906)">100%</div>
<div class="dd" style="left:572px;top:50px"></div>
<div class="dd" style="left:747px;top:50px"></div>
<div class="dd" style="left:878px;top:50px"></div>
<div class="dd" style="left:1027px;top:50px"></div>
<div class="dd" style="left:1185px;top:50px"></div>
<div class="dd" style="left:1308px;top:50px"></div>
<div class="dd" style="left:1877px;top:50px;width:17px"></div>
<div class="t" style="left:27px;top:605.35px;width:74px;text-align:center;transform:rotate(-90deg);transform-origin:50% 50%;font-weight:bold;font-size:14.3px;color:#000">Score (1-5)</div>
</body></html>
